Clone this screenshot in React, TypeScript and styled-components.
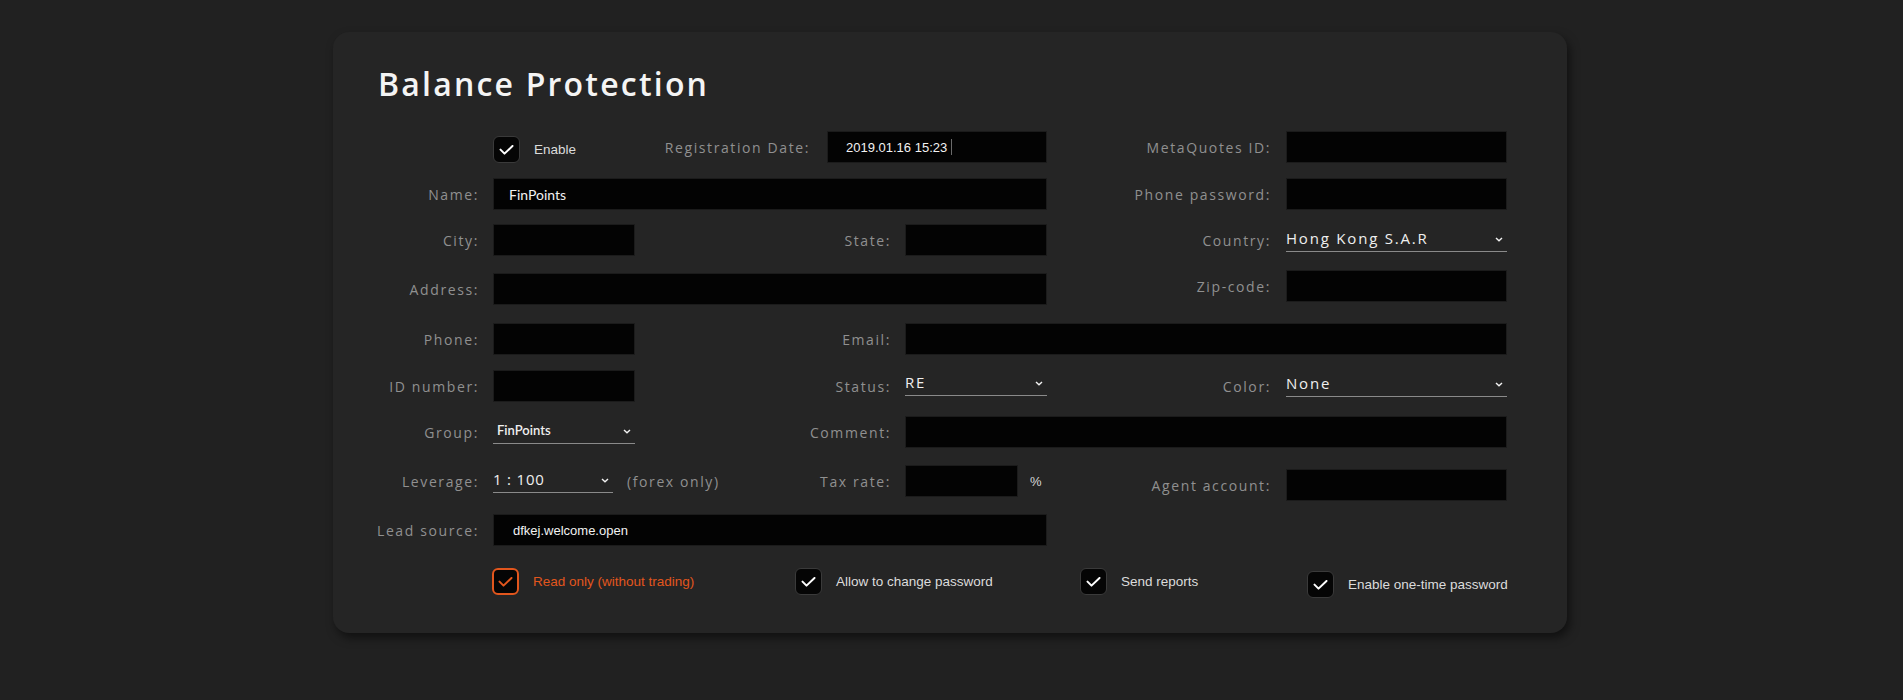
import React from 'react'
import styled, { createGlobalStyle, css } from 'styled-components'

const GlobalStyle = createGlobalStyle`
  html, body {
    margin: 0;
    background: #212121;
  }
`

const sans = `'Open Sans', 'Noto Sans', sans-serif`
const arial = `'Liberation Sans', Arial, sans-serif`
const lato = `Lato, 'Liberation Sans', sans-serif`

type Place = { $col: string; $row: number; $dy?: number }

const placed = css<Place>`
  grid-column: ${({ $col }) => $col};
  grid-row: ${({ $row }) => $row};
  margin-top: ${({ $dy }) => $dy ?? 0}px;
`

const Page = styled.main`
  min-height: 700px;
  padding: 32px 0 0 333px;
  box-sizing: border-box;
  display: flex;
  align-items: flex-start;
`

const Card = styled.section`
  width: 1234px;
  box-sizing: border-box;
  padding: 36px 60px 35px 45px;
  background: #252525;
  border-radius: 16px;
  box-shadow: 3px 5px 10px rgba(0, 0, 0, 0.5);
`

const Title = styled.h1`
  margin: 0 0 31px;
  font-family: ${sans};
  font-weight: 600;
  font-size: 32px;
  line-height: 32px;
  letter-spacing: 2.2px;
  color: #f4f4f4;
`

const FormGrid = styled.div`
  display: grid;
  grid-template-columns: 115px 142px 270px 142px 239px 221px;
  grid-template-rows: 47px 46px 49px 50px 47px 46px 49px 49px 32px;
  align-items: start;
`

const Caption = styled.span`
  font-family: ${sans};
  font-size: 14px;
  letter-spacing: 1.6px;
  color: #909090;
  white-space: nowrap;
`

const Label = styled(Caption)<Place & { $pad?: number }>`
  ${placed};
  height: 32px;
  display: flex;
  align-items: center;
  justify-content: flex-end;
  padding-right: ${({ $pad }) => $pad ?? 14}px;
`

const TextBox = styled.input<Place & { $w?: number; $font?: 'lato' | 'arial' }>`
  ${placed};
  width: ${({ $w }) => ($w ? `${$w}px` : '100%')};
  height: 32px;
  box-sizing: border-box;
  padding: 0 15px;
  background: #030303;
  border: 1px solid #1b1b1b;
  outline: none;
  color: #f2f2f2;
  font-family: ${({ $font }) => ($font === 'arial' ? arial : lato)};
  font-size: ${({ $font }) => ($font === 'arial' ? 13 : 14)}px;
`

const Field = styled.div<Place & { $end?: boolean; $gap?: number }>`
  ${placed};
  height: 32px;
  display: flex;
  align-items: center;
  justify-content: ${({ $end }) => ($end ? 'flex-end' : 'flex-start')};
  gap: ${({ $gap }) => $gap ?? 0}px;
`

const SelectBox = styled.div<{ $w?: number; $font?: 'lato'; $tight?: boolean }>`
  width: ${({ $w }) => ($w ? `${$w}px` : '100%')};
  height: 28px;
  box-sizing: border-box;
  display: flex;
  align-items: center;
  justify-content: space-between;
  padding: 0 4px 0 ${({ $font }) => ($font ? 4 : 0)}px;
  border-bottom: 1px solid #8a8a8a;
  color: #efefef;
  font-family: ${({ $font }) => ($font ? lato : sans)};
  font-size: ${({ $font }) => ($font ? 13 : 15)}px;
  font-weight: ${({ $font }) => ($font ? 600 : 400)};
  letter-spacing: ${({ $font, $tight }) => ($font ? 0 : $tight ? 0.8 : 1.8)}px;
  white-space: nowrap;

  svg {
    margin-top: 4px;
  }
`

const SelectCell = styled.div<Place>`
  ${placed};
`

const Chevron = () => (
  <svg width="8" height="5" viewBox="0 0 8 5" fill="none">
    <path d="M1 1l3 2.8L7 1" stroke="#f2f2f2" strokeWidth="1.4" />
  </svg>
)

const Select: React.FC<Place & { value: string; w?: number; font?: 'lato' }> = ({
  value,
  w,
  font,
  ...place
}) => (
  <SelectCell {...place}>
    <SelectBox $w={w} $font={font}>
      <span>{value}</span>
      <Chevron />
    </SelectBox>
  </SelectCell>
)

const Note = styled(Caption)`
  margin-left: 14px;
`

const Percent = styled.span`
  margin-left: 12px;
  font-family: ${arial};
  font-size: 13px;
  color: #d8d8d8;
`

const DateBox = styled.div`
  position: relative;
  display: flex;

  &::after {
    content: '';
    position: absolute;
    left: 124px;
    top: 8px;
    width: 1px;
    height: 16px;
    background: #6a6a6a;
  }
`

const CheckItem = styled.label<{ $dy?: number }>`
  display: flex;
  align-items: center;
  gap: 14px;
  margin-top: ${({ $dy }) => $dy ?? 0}px;
`

const Box = styled.span<{ $accent?: boolean }>`
  width: 27px;
  height: 27px;
  box-sizing: border-box;
  flex: none;
  display: flex;
  align-items: center;
  justify-content: center;
  background: #050505;
  border-radius: 6px;
  border: ${({ $accent }) => ($accent ? '2px solid #e2561d' : '1px solid #3a3a3a')};
`

const CheckText = styled.span<{ $accent?: boolean }>`
  font-family: ${arial};
  font-size: 13.5px;
  color: ${({ $accent }) => ($accent ? '#e2561d' : '#dcdcdc')};
  white-space: nowrap;
`

const Checkbox: React.FC<{ label: string; accent?: boolean; dy?: number }> = ({
  label,
  accent,
  dy
}) => (
  <CheckItem $dy={dy}>
    <Box $accent={accent}>
      <svg width="15" height="10" viewBox="0 0 15 10" fill="none">
        <path
          d="M1.5 4.6l4 4 8-7.6"
          stroke={accent ? '#e2561d' : '#ffffff'}
          strokeWidth="2"
          strokeLinecap="round"
          strokeLinejoin="round"
        />
      </svg>
    </Box>
    <CheckText $accent={accent}>{label}</CheckText>
  </CheckItem>
)

const EnableCell = styled.div<Place>`
  ${placed};
  height: 27px;
  display: flex;
  align-items: center;
`

const OptionRow = styled.div`
  display: grid;
  grid-template-columns: 303px 285px 227px auto;
  align-items: start;
  margin: 22px 0 0 114px;
`

export default function App() {
  return (
    <>
      <GlobalStyle />
      <Page>
        <Card>
          <Title>Balance Protection</Title>
          <FormGrid>
            {/* row 1 */}
            <EnableCell $col="2" $row={1} $dy={5}>
              <Checkbox label="Enable" />
            </EnableCell>
            <Field $col="3 / 5" $row={1} $end $gap={17}>
              <Caption>Registration Date:</Caption>
              <DateBox>
                <TextBox
                  $col="auto"
                  $row={1}
                  $w={220}
                  $font="arial"
                  readOnly
                  value="2019.01.16 15:23"
                  style={{ paddingLeft: 18 }}
                />
              </DateBox>
            </Field>
            <Label $col="5" $row={1} $pad={15}>MetaQuotes ID:</Label>
            <TextBox $col="6" $row={1} readOnly value="" />

            {/* row 2 */}
            <Label $col="1" $row={2}>Name:</Label>
            <TextBox $col="2 / 5" $row={2} readOnly value="FinPoints" />
            <Label $col="5" $row={2} $pad={15}>Phone password:</Label>
            <TextBox $col="6" $row={2} readOnly value="" />

            {/* row 3 */}
            <Label $col="1" $row={3}>City:</Label>
            <TextBox $col="2" $row={3} readOnly value="" />
            <Label $col="3" $row={3}>State:</Label>
            <TextBox $col="4" $row={3} readOnly value="" />
            <Label $col="5" $row={3} $pad={15}>Country:</Label>
            <Select $col="6" $row={3} value="Hong Kong S.A.R" />

            {/* row 4 */}
            <Label $col="1" $row={4}>Address:</Label>
            <TextBox $col="2 / 5" $row={4} readOnly value="" />
            <Label $col="5" $row={4} $pad={15} $dy={-3}>Zip-code:</Label>
            <TextBox $col="6" $row={4} $dy={-3} readOnly value="" />

            {/* row 5 */}
            <Label $col="1" $row={5}>Phone:</Label>
            <TextBox $col="2" $row={5} readOnly value="" />
            <Label $col="3" $row={5}>Email:</Label>
            <TextBox $col="4 / 7" $row={5} readOnly value="" />

            {/* row 6 */}
            <Label $col="1" $row={6}>ID number:</Label>
            <TextBox $col="2" $row={6} readOnly value="" />
            <Label $col="3" $row={6}>Status:</Label>
            <Select $col="4" $row={6} $dy={-2} value="RE" />
            <Label $col="5" $row={6} $pad={15}>Color:</Label>
            <Select $col="6" $row={6} $dy={-1} value="None" />

            {/* row 7 */}
            <Label $col="1" $row={7}>Group:</Label>
            <Select $col="2" $row={7} value="FinPoints" font="lato" />
            <Label $col="3" $row={7}>Comment:</Label>
            <TextBox $col="4 / 7" $row={7} readOnly value="" />

            {/* row 8 */}
            <Label $col="1" $row={8}>Leverage:</Label>
            <Field $col="2 / 4" $row={8}>
              <SelectBox $w={120} $tight style={{ marginTop: -4 }}>
                <span>1 : 100</span>
                <Chevron />
              </SelectBox>
              <Note>(forex only)</Note>
            </Field>
            <Label $col="3" $row={8}>Tax rate:</Label>
            <Field $col="4" $row={8}>
              <TextBox $col="auto" $row={8} $w={113} readOnly value="" />
              <Percent>%</Percent>
            </Field>
            <Label $col="5" $row={8} $pad={15} $dy={4}>Agent account:</Label>
            <TextBox $col="6" $row={8} $dy={4} readOnly value="" />

            {/* row 9 */}
            <Label $col="1" $row={9}>Lead source:</Label>
            <TextBox
              $col="2 / 5"
              $row={9}
              $font="arial"
              readOnly
              value="dfkej.welcome.open"
              style={{ paddingLeft: 19 }}
            />
          </FormGrid>

          <OptionRow>
            <Checkbox label="Read only (without trading)" accent />
            <Checkbox label="Allow to change password" />
            <Checkbox label="Send reports" />
            <Checkbox label="Enable one-time password" dy={3} />
          </OptionRow>
        </Card>
      </Page>
    </>
  )
}
